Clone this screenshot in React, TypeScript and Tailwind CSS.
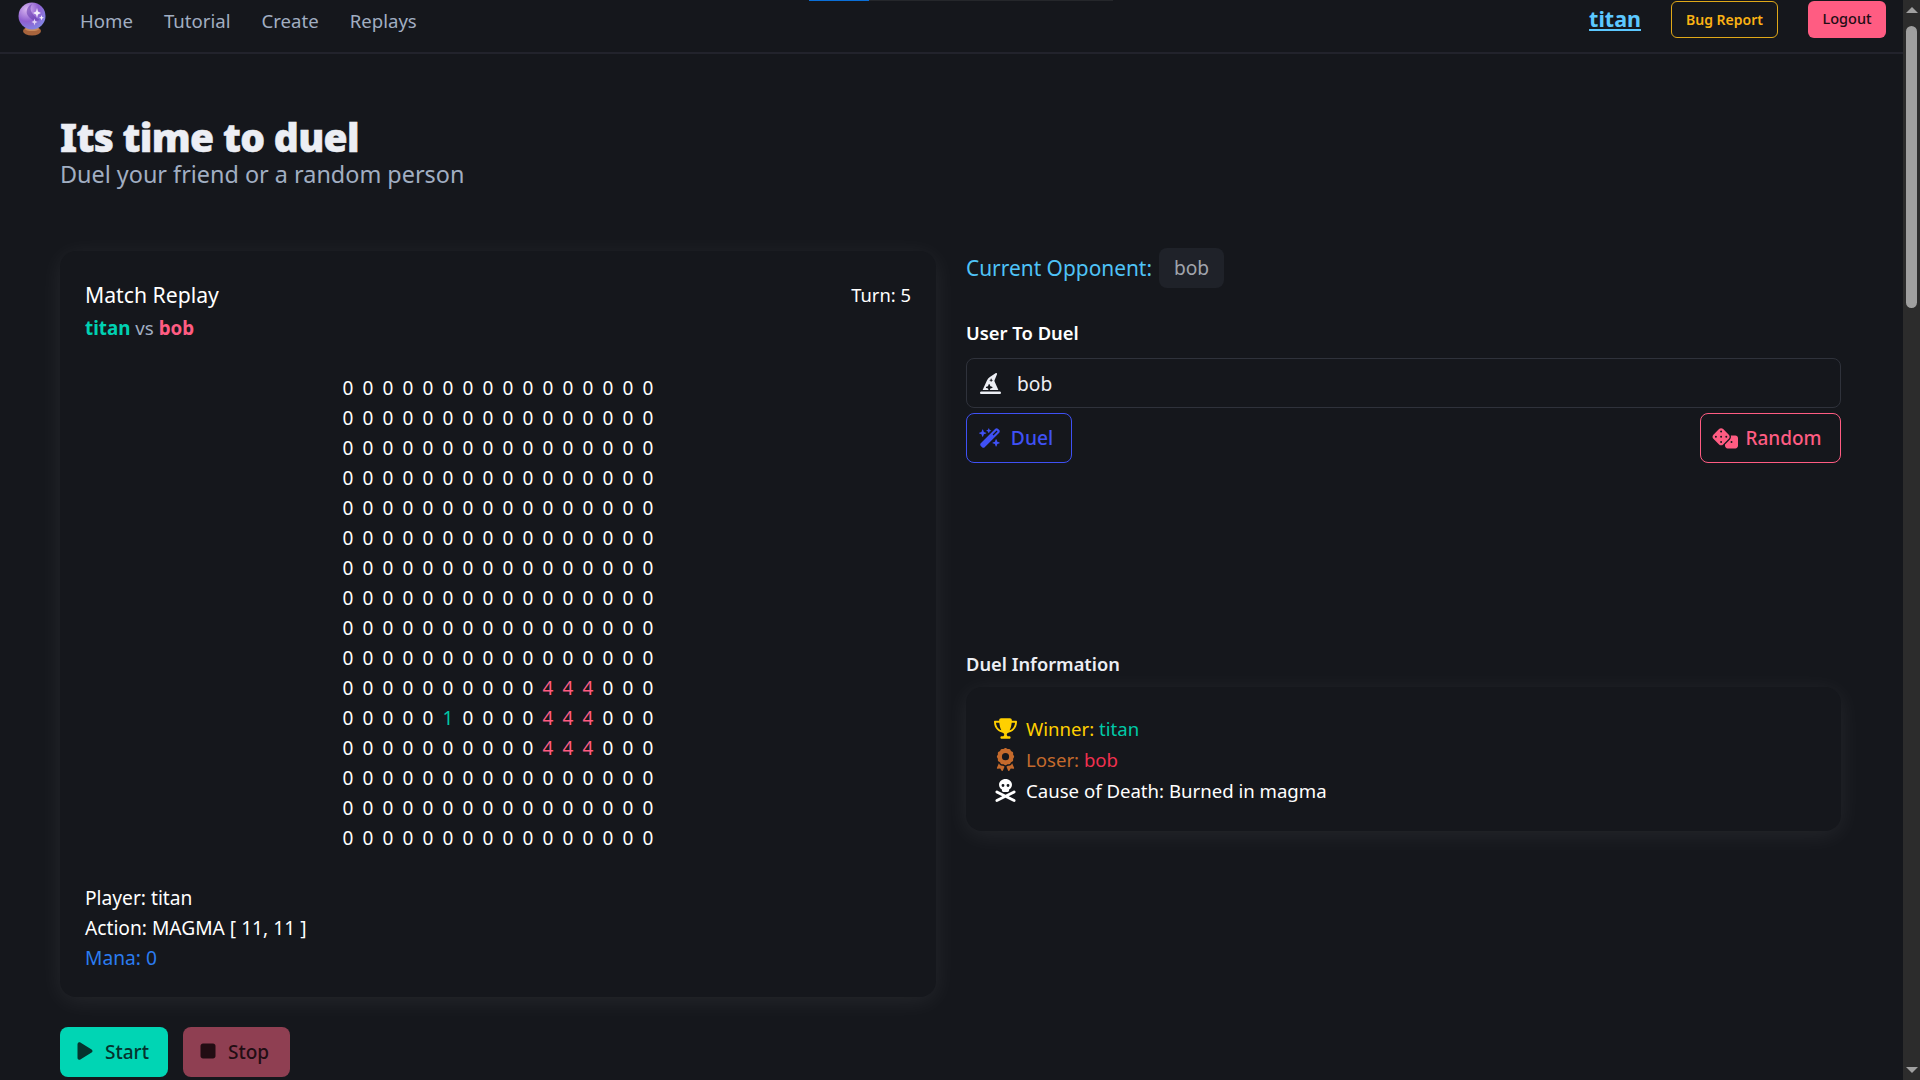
import React from 'react';
import { FaHatWizard, FaWandMagicSparkles, FaDice, FaTrophy, FaAward, FaSkullCrossbones, FaPlay, FaStop } from 'react-icons/fa6';

const navLinks = ['Home', 'Tutorial', 'Create', 'Replays'];

// the board at turn 5, cell values by row
const board: number[][] = Array.from({ length: 16 }, (_, row) =>
  Array.from({ length: 16 }, (_, col) => {
    if (row >= 10 && row <= 12 && col >= 10 && col <= 12) return 4;
    if (row === 11 && col === 5) return 1;
    return 0;
  })
);

const CrystalBall = () => (
  <svg width="30" height="34" viewBox="0 0 30 34">
    <defs>
      <radialGradient id="ball" cx="0.3" cy="0.25" r="0.9">
        <stop offset="0" stopColor="#d8b6f0" />
        <stop offset="0.5" stopColor="#8f5fd0" />
        <stop offset="1" stopColor="#7f8fe8" />
      </radialGradient>
    </defs>
    <ellipse cx="14" cy="29" rx="9" ry="4.5" fill="#a8643c" />
    <ellipse cx="14" cy="27" rx="7" ry="2" fill="#c98a5c" />
    <circle cx="14" cy="14" r="13.5" fill="url(#ball)" />
    <path d="M14 2 C10 8 15 14 22 18 C18 20 12 18 9 12 C8 8 10 4 14 2Z" fill="#6a3fb0" opacity="0.6" />
    <path d="M19 6 L20 9.5 L23 11 L20 12.5 L19 16 L18 12.5 L15 11 L18 9.5Z" fill="#f4ecfc" />
    <path d="M23.5 13 L24.2 15 L26 15.8 L24.2 16.6 L23.5 18.5 L22.8 16.6 L21 15.8 L22.8 15Z" fill="#f4ecfc" />
    <path d="M16.5 16.5 L17.3 19 L19.5 20 L17.3 21 L16.5 23.5 L15.7 21 L13.5 20 L15.7 19Z" fill="#e3d3f5" />
  </svg>
);

export default function App() {
  return (
    <div className="flex h-screen overflow-hidden bg-[#15171c] font-['Noto_Sans','Open_Sans',sans-serif] text-[18px] text-white">
      <div className="relative min-w-0 flex-1">
        <div className="absolute left-[809px] top-0 flex h-px w-[304px] bg-[#25272b]">
          <div className="h-px w-[60px] bg-[#0a6fd8]" />
        </div>

        <nav className="flex h-[54px] items-center border-b-2 border-[#22232c] pb-[14px] pl-[18px] pr-[17px]">
          <CrystalBall />
          <div className="ml-[32px] mt-[3px] flex gap-[31px] text-[18.6px] text-[#a1aec2]">
            {navLinks.map((link) => (
              <a key={link}>{link}</a>
            ))}
          </div>
          <a className="ml-auto text-[21.5px] font-bold text-[#5cc8ff] underline">titan</a>
          <button className="ml-[30px] flex h-[37px] w-[107px] items-center justify-center rounded-md border border-[#e0a818] text-[14px] font-semibold text-[#fbb214]">
            Bug Report
          </button>
          <button className="ml-[30px] flex h-[37px] w-[78px] items-center justify-center rounded-md bg-[#ff5c82] text-[14.5px] font-medium text-[#210d14]">
            Logout
          </button>
        </nav>

        <div className="px-[60px] pt-[59px]">
          <h1 className="text-[39px] leading-[47px] font-black tracking-[-0.7px] text-[#eceef4] [-webkit-text-stroke:0.5px_#eceef4]">Its time to duel</h1>
          <p className="text-[23.4px] leading-[28px] text-[#a1aec2]">Duel your friend or a random person</p>

          <div className="mt-[60px] grid grid-cols-[876px_875px] gap-[30px]">
            <div className="pt-[3px]">
              <div className="flex h-[746px] flex-col rounded-2xl bg-[#15171c] px-[25px] pt-[28px] shadow-[0_4px_24px_rgba(255,255,255,0.07)]">
                <div className="flex items-start justify-between">
                  <div>
                    <div className="text-[21.2px] leading-[32px]">Match Replay</div>
                    <div className="mt-[3px] text-[18.8px] leading-[28px] text-[#a1aec2]">
                      <span className="font-bold text-[#00d1b2]">titan</span> vs{' '}
                      <span className="font-bold text-[#ff5c82]">bob</span>
                    </div>
                  </div>
                  <div className="pt-[2px] text-[18.4px]">Turn: 5</div>
                </div>

                <div className="mt-[31px] flex flex-col items-center">
                  {board.map((row, r) => (
                    <div key={r} className="flex h-[30px] items-center">
                      {row.map((cell, c) => (
                        <span
                          key={c}
                          className={
                            'w-[20px] text-center text-[19px] ' +
                            (cell === 4 ? 'text-[#ff5c82]' : cell === 1 ? 'text-[#00c9a7]' : 'text-white')
                          }
                        >
                          {cell}
                        </span>
                      ))}
                    </div>
                  ))}
                </div>

                <div className="mt-[30px] text-[19.2px] leading-[30px]">
                  <div>Player: titan</div>
                  <div>Action: MAGMA [ 11, 11 ]</div>
                  <div className="text-[#2b7cf0]">Mana: 0</div>
                </div>
              </div>

              <div className="mt-[30px] flex gap-[15px]">
                <button className="flex h-[50px] w-[108px] items-center gap-[10px] rounded-lg bg-[#00d5b4] pl-[15px] text-[19px] font-medium text-[#05332d]">
                  <FaPlay className="-mt-[2px] size-[20px]" />
                  Start
                </button>
                <button className="flex h-[50px] w-[107px] items-center gap-[10px] rounded-lg bg-[#8f3f52] pl-[15px] text-[19px] font-medium text-[#220d13]">
                  <FaStop className="-mt-[2px] size-[20px]" />
                  Stop
                </button>
              </div>
            </div>

            <div>
              <div className="flex items-center gap-[7px]">
                <span className="pt-[1px] text-[20.9px] text-[#4fc3f7]">Current Opponent:</span>
                <span className="flex h-[40px] w-[65px] items-center justify-center rounded-lg bg-[#1f2229] pt-[1px] text-[19.2px] text-[#a0a4ac]">bob</span>
              </div>

              <div className="mt-[32px] text-[18.4px] leading-[26px] font-semibold">User To Duel</div>
              <div className="mt-[12px] flex h-[50px] items-center gap-[16px] rounded-lg border border-[#2f323b] px-[13px] text-[19.2px] text-[#eceef4]">
                <FaHatWizard className="size-[21px]" />
                <span className="pt-[2px]">bob</span>
              </div>
              <div className="mt-[5px] flex justify-between">
                <button className="flex h-[50px] w-[106px] items-center justify-center gap-[10px] rounded-lg border border-[#3f51f5] pr-[6px] text-[19.2px] font-medium text-[#3f51f5]">
                  <FaWandMagicSparkles className="size-[22px]" />
                  Duel
                </button>
                <button className="flex h-[50px] w-[141px] items-center justify-center gap-[7px] rounded-lg border border-[#ff5c82] pr-[7px] text-[19px] font-medium text-[#ff5c82]">
                  <FaDice className="size-[26px]" />
                  Random
                </button>
              </div>

              <div className="mt-[188px] text-[18.3px] leading-[26px] font-semibold text-[#eceef4]">Duel Information</div>
              <div className="mt-[10px] flex h-[144px] flex-col justify-center rounded-2xl bg-[#15171c] px-[28px] text-[18.6px] leading-[31px] shadow-[0_4px_24px_rgba(255,255,255,0.07)]">
                <div className="flex items-center gap-[9px] text-[#ffd000]">
                  <FaTrophy className="size-[23px]" />
                  <span>
                    Winner: <span className="text-[#00c9a7]">titan</span>
                  </span>
                </div>
                <div className="flex items-center gap-[9px] text-[#c46a2c]">
                  <FaAward className="size-[23px]" />
                  <span>
                    Loser: <span className="text-[#f0304f]">bob</span>
                  </span>
                </div>
                <div className="flex items-center gap-[9px]">
                  <FaSkullCrossbones className="size-[23px]" />
                  <span>Cause of Death: Burned in magma</span>
                </div>
              </div>
            </div>
          </div>
        </div>
      </div>

      {/* page scrollbar */}
      <div className="flex h-full w-[17px] shrink-0 flex-col items-center bg-[#2c2c2c]">
        <div className="mt-[7px] h-0 w-0 border-x-[6px] border-b-[6px] border-x-transparent border-b-[#a0a0a0]" />
        <div className="mt-[13px] h-[282px] w-[11px] rounded-full bg-[#9f9f9f]" />
        <div className="mb-[7px] mt-auto h-0 w-0 border-x-[6px] border-t-[6px] border-x-transparent border-t-[#a0a0a0]" />
      </div>
    </div>
  );
}
